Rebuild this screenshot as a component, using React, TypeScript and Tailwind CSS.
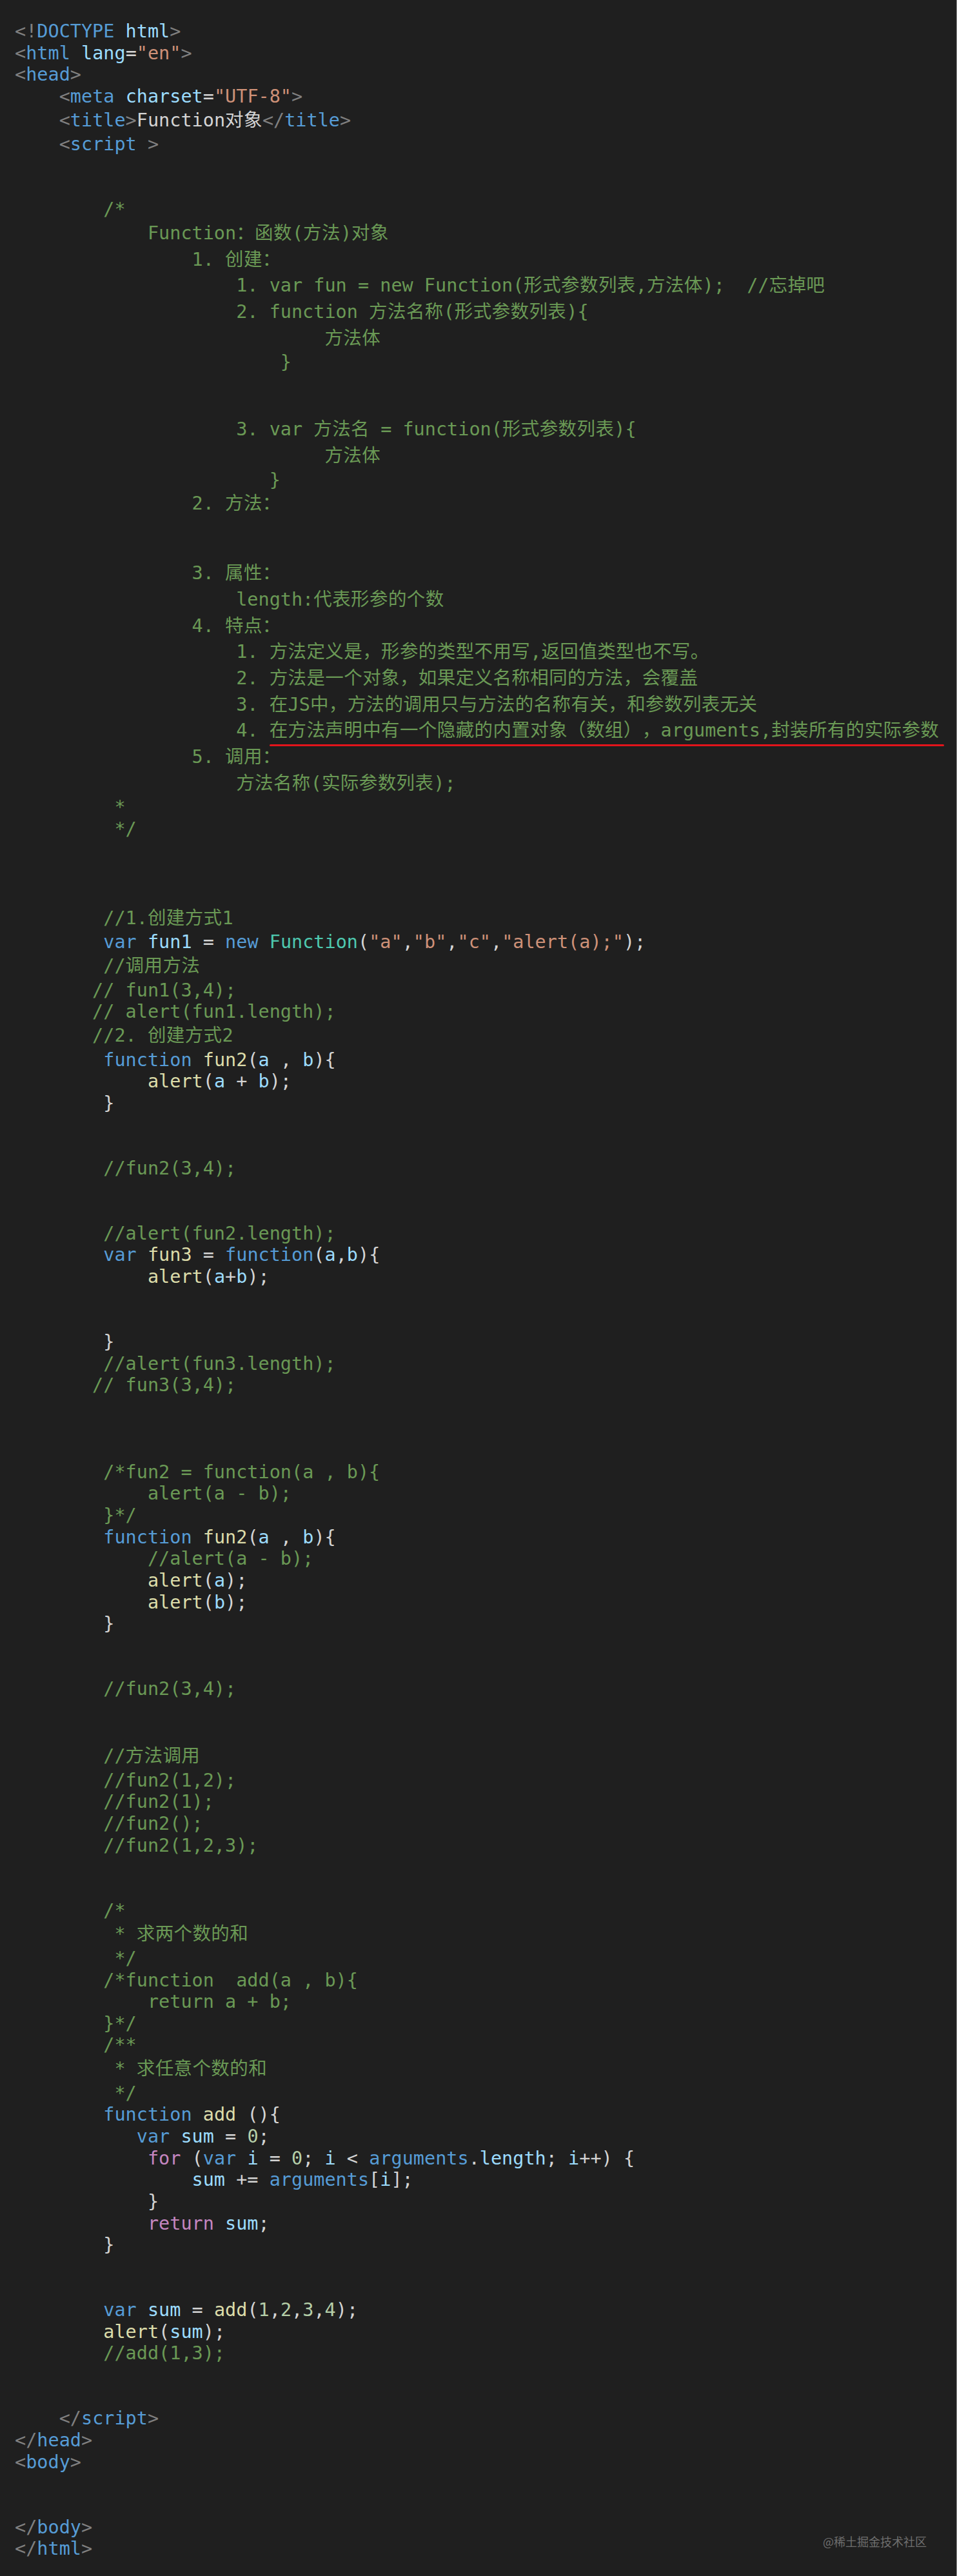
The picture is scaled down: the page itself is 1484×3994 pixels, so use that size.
import React from "react";

type Seg = [string, string];
type LineDef = { ind: number; c?: boolean; segs: Seg[]; mark?: boolean };

const COL: Record<string, string> = {
  br: "text-[#808080]",
  tag: "text-[#569cd6]",
  attr: "text-[#9cdcfe]",
  str: "text-[#ce9178]",
  txt: "text-[#d4d4d4]",
  cm: "text-[#6a9955]",
  kw: "text-[#569cd6]",
  fn: "text-[#dcdcaa]",
  cls: "text-[#4ec9b0]",
  vr: "text-[#9cdcfe]",
  ctl: "text-[#c586c0]",
  num: "text-[#b5cea8]",
};

const B: LineDef = { ind: 0, segs: [] };
const cm = (ind: number, text: string, c = false): LineDef => ({ ind, c, segs: [["cm", text]] });

const lines: LineDef[] = [
  { ind: 0, segs: [["br", "<!"], ["kw", "DOCTYPE"], ["txt", " "], ["attr", "html"], ["br", ">"]] },
  { ind: 0, segs: [["br", "<"], ["tag", "html"], ["txt", " "], ["attr", "lang"], ["txt", "="], ["str", '"en"'], ["br", ">"]] },
  { ind: 0, segs: [["br", "<"], ["tag", "head"], ["br", ">"]] },
  { ind: 4, segs: [["br", "<"], ["tag", "meta"], ["txt", " "], ["attr", "charset"], ["txt", "="], ["str", '"UTF-8"'], ["br", ">"]] },
  { ind: 4, c: true, segs: [["br", "<"], ["tag", "title"], ["br", ">"], ["txt", "Function对象"], ["br", "</"], ["tag", "title"], ["br", ">"]] },
  { ind: 4, segs: [["br", "<"], ["tag", "script"], ["br", " >"]] },
  B,
  B,
  cm(8, "/*"),
  cm(12, "Function：函数(方法)对象", true),
  cm(16, "1. 创建：", true),
  cm(20, "1. var fun = new Function(形式参数列表,方法体);  //忘掉吧", true),
  cm(20, "2. function 方法名称(形式参数列表){", true),
  cm(28, "方法体", true),
  cm(24, "}"),
  B,
  B,
  cm(20, "3. var 方法名 = function(形式参数列表){", true),
  cm(28, "方法体", true),
  cm(23, "}"),
  cm(16, "2. 方法：", true),
  B,
  B,
  cm(16, "3. 属性：", true),
  cm(20, "length:代表形参的个数", true),
  cm(16, "4. 特点：", true),
  cm(20, "1. 方法定义是，形参的类型不用写,返回值类型也不写。", true),
  cm(20, "2. 方法是一个对象，如果定义名称相同的方法，会覆盖", true),
  cm(20, "3. 在JS中，方法的调用只与方法的名称有关，和参数列表无关", true),
  { ...cm(20, "4. 在方法声明中有一个隐藏的内置对象（数组），arguments,封装所有的实际参数", true), mark: true },
  cm(16, "5. 调用：", true),
  cm(20, "方法名称(实际参数列表);", true),
  cm(9, "*"),
  cm(9, "*/"),
  B,
  B,
  B,
  cm(8, "//1.创建方式1", true),
  {
    ind: 8,
    segs: [
      ["kw", "var"], ["txt", " "], ["vr", "fun1"], ["txt", " = "], ["kw", "new"], ["txt", " "], ["cls", "Function"],
      ["txt", "("], ["str", '"a"'], ["txt", ","], ["str", '"b"'], ["txt", ","], ["str", '"c"'], ["txt", ","], ["str", '"alert(a);"'], ["txt", ");"],
    ],
  },
  cm(8, "//调用方法", true),
  cm(7, "// fun1(3,4);"),
  cm(7, "// alert(fun1.length);"),
  cm(7, "//2. 创建方式2", true),
  { ind: 8, segs: [["kw", "function"], ["txt", " "], ["fn", "fun2"], ["txt", "("], ["vr", "a"], ["txt", " , "], ["vr", "b"], ["txt", "){"]] },
  { ind: 12, segs: [["fn", "alert"], ["txt", "("], ["vr", "a"], ["txt", " + "], ["vr", "b"], ["txt", ");"]] },
  { ind: 8, segs: [["txt", "}"]] },
  B,
  B,
  cm(8, "//fun2(3,4);"),
  B,
  B,
  cm(8, "//alert(fun2.length);"),
  { ind: 8, segs: [["kw", "var"], ["txt", " "], ["fn", "fun3"], ["txt", " = "], ["kw", "function"], ["txt", "("], ["vr", "a"], ["txt", ","], ["vr", "b"], ["txt", "){"]] },
  { ind: 12, segs: [["fn", "alert"], ["txt", "("], ["vr", "a"], ["txt", "+"], ["vr", "b"], ["txt", ");"]] },
  B,
  B,
  { ind: 8, segs: [["txt", "}"]] },
  cm(8, "//alert(fun3.length);"),
  cm(7, "// fun3(3,4);"),
  B,
  B,
  B,
  cm(8, "/*fun2 = function(a , b){"),
  cm(12, "alert(a - b);"),
  cm(8, "}*/"),
  { ind: 8, segs: [["kw", "function"], ["txt", " "], ["fn", "fun2"], ["txt", "("], ["vr", "a"], ["txt", " , "], ["vr", "b"], ["txt", "){"]] },
  cm(12, "//alert(a - b);"),
  { ind: 12, segs: [["fn", "alert"], ["txt", "("], ["vr", "a"], ["txt", ");"]] },
  { ind: 12, segs: [["fn", "alert"], ["txt", "("], ["vr", "b"], ["txt", ");"]] },
  { ind: 8, segs: [["txt", "}"]] },
  B,
  B,
  cm(8, "//fun2(3,4);"),
  B,
  B,
  cm(8, "//方法调用", true),
  cm(8, "//fun2(1,2);"),
  cm(8, "//fun2(1);"),
  cm(8, "//fun2();"),
  cm(8, "//fun2(1,2,3);"),
  B,
  B,
  cm(8, "/*"),
  cm(9, "* 求两个数的和", true),
  cm(9, "*/"),
  cm(8, "/*function  add(a , b){"),
  cm(12, "return a + b;"),
  cm(8, "}*/"),
  cm(8, "/**"),
  cm(9, "* 求任意个数的和", true),
  cm(9, "*/"),
  { ind: 8, segs: [["kw", "function"], ["txt", " "], ["fn", "add"], ["txt", " (){"]] },
  { ind: 11, segs: [["kw", "var"], ["txt", " "], ["vr", "sum"], ["txt", " = "], ["num", "0"], ["txt", ";"]] },
  {
    ind: 12,
    segs: [
      ["ctl", "for"], ["txt", " ("], ["kw", "var"], ["txt", " "], ["vr", "i"], ["txt", " = "], ["num", "0"], ["txt", "; "], ["vr", "i"], ["txt", " < "],
      ["kw", "arguments"], ["txt", "."], ["vr", "length"], ["txt", "; "], ["vr", "i"], ["txt", "++) {"],
    ],
  },
  { ind: 16, segs: [["vr", "sum"], ["txt", " += "], ["kw", "arguments"], ["txt", "["], ["vr", "i"], ["txt", "];"]] },
  { ind: 12, segs: [["txt", "}"]] },
  { ind: 12, segs: [["ctl", "return"], ["txt", " "], ["vr", "sum"], ["txt", ";"]] },
  { ind: 8, segs: [["txt", "}"]] },
  B,
  B,
  {
    ind: 8,
    segs: [
      ["kw", "var"], ["txt", " "], ["vr", "sum"], ["txt", " = "], ["fn", "add"], ["txt", "("], ["num", "1"], ["txt", ","], ["num", "2"], ["txt", ","],
      ["num", "3"], ["txt", ","], ["num", "4"], ["txt", ");"],
    ],
  },
  { ind: 8, segs: [["fn", "alert"], ["txt", "("], ["vr", "sum"], ["txt", ");"]] },
  cm(8, "//add(1,3);"),
  B,
  B,
  { ind: 4, segs: [["br", "</"], ["tag", "script"], ["br", ">"]] },
  { ind: 0, segs: [["br", "</"], ["tag", "head"], ["br", ">"]] },
  { ind: 0, segs: [["br", "<"], ["tag", "body"], ["br", ">"]] },
  B,
  B,
  { ind: 0, segs: [["br", "</"], ["tag", "body"], ["br", ">"]] },
  { ind: 0, segs: [["br", "</"], ["tag", "html"], ["br", ">"]] },
];

const CJK = /([\u3000-\u303f\u4e00-\u9fff\uff00-\uffef]+)/;

function Txt({ text }: { text: string }) {
  const parts = text.split(CJK);
  return (
    <>
      {parts.map((p, i) =>
        i % 2 === 1 ? (
          <span key={i} className="tracking-[0.4px]">
            {p}
          </span>
        ) : (
          <React.Fragment key={i}>{p}</React.Fragment>
        )
      )}
    </>
  );
}

function CodeLine({ def }: { def: LineDef }) {
  const cls = def.c ? "h-[40.7px] leading-[40.7px]" : "h-[33.65px] leading-[33.65px]";
  return (
    <div className={`relative whitespace-pre ${cls}`}>
      {" ".repeat(def.ind)}
      {def.segs.map((s, i) => (
        <span key={i} className={COL[s[0]]}>
          <Txt text={s[1]} />
        </span>
      ))}
      {def.mark && (
        <div className="absolute left-[395px] bottom-[-3.5px] h-[3px] w-[1046px] rounded-full bg-[#e3141b]" />
      )}
    </div>
  );
}

export default function App() {
  return (
    <div className="relative h-[3994px] w-[1484px] overflow-hidden border-r border-[#8a8a8a] bg-[#1f1f1f] pl-[23px] pt-[32px] font-['DejaVu_Sans_Mono','Noto_Sans_CJK_SC',monospace] text-[28.5px] text-[#d4d4d4] [text-spacing-trim:space-all]">
      {lines.map((l, i) => (
        <CodeLine key={i} def={l} />
      ))}
      <div className="absolute bottom-[41px] right-[46px] font-['Noto_Sans_CJK_SC',sans-serif] text-[18px] leading-[26px] text-[#6e6e6e]">
        @稀土掘金技术社区
      </div>
    </div>
  );
}
